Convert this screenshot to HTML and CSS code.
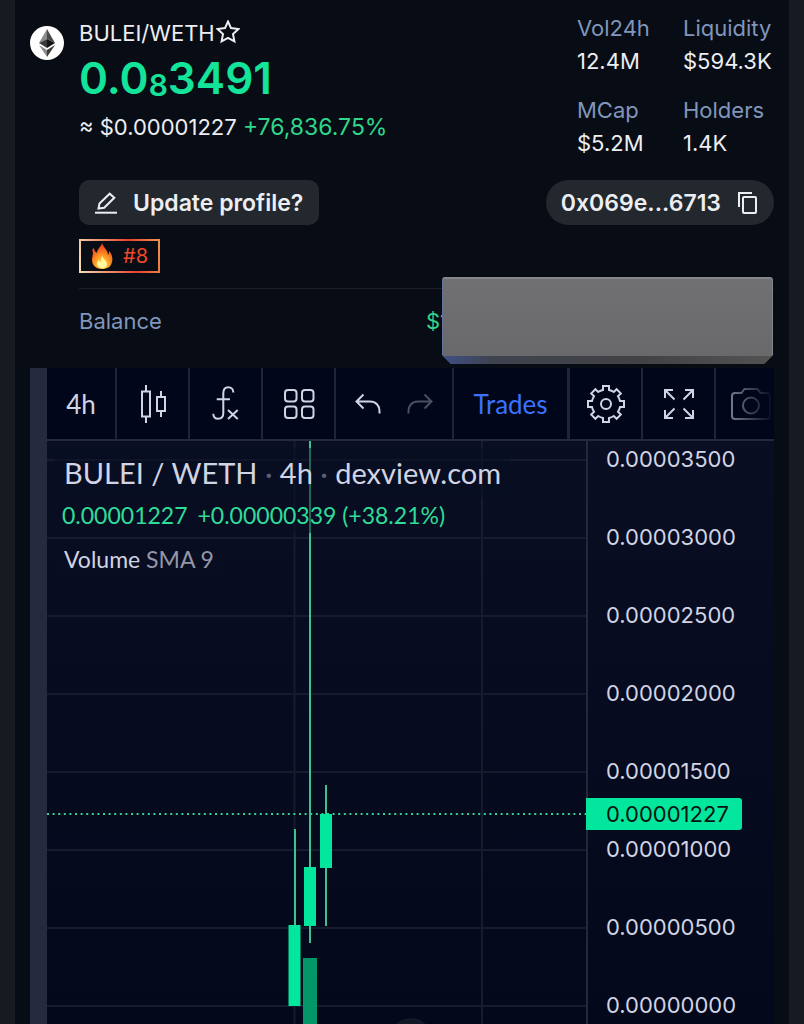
FILE: index.html
```html
<!DOCTYPE html>
<html lang="en">
<head>
    <meta charset="utf-8">
    <meta name="viewport" content="width=device-width, initial-scale=1">
    <title>BULEI/WETH</title>
    <link rel="stylesheet" href="styles.css">
</head>
<body>
<main class="panel">
    <header class="header">
        <svg class="coin" viewBox="0 0 34 34">
            <circle cx="17" cy="17" r="17" fill="#fff"/>
            <path d="M17 3L9 17l8-4z" fill="#8c8c8c"/>
            <path d="M17 3l8 14-8-4z" fill="#4a4a4a"/>
            <path d="M9 17l8-4v9z" fill="#3c3c3b"/>
            <path d="M25 17l-8-4v9z" fill="#141414"/>
            <path d="M9 19l8 5v7z" fill="#8c8c8c"/>
            <path d="M25 19l-8 5v7z" fill="#3c3c3b"/>
        </svg>
        <div class="identity">
            <h1 class="pair">BULEI/WETH
                <button class="star" type="button" aria-label="Favorite">
                    <svg width="24" height="24" viewBox="0 0 24 24"><path d="M12 1.500l3 6.600 7.500 1-5.500 5 1.400 7.200L12 17.800l-6.400 3.500L7 14.100l-5.500-5 7.500-1z"/></svg>
                </button>
            </h1>
            <div class="price">0.0<sub>8</sub>3491</div>
            <div class="usd">≈ $0.00001227 <span class="up">+76,836.75%</span></div>
        </div>
        <dl class="stats">
            <div><dt>Vol24h</dt><dd>12.4M</dd></div>
            <div><dt>Liquidity</dt><dd>$594.3K</dd></div>
            <div><dt>MCap</dt><dd>$5.2M</dd></div>
            <div><dt>Holders</dt><dd>1.4K</dd></div>
        </dl>
    </header>

    <section class="details">
        <div class="actions">
            <button class="update" type="button">
                <svg width="22" height="22" viewBox="0 0 22 22"><path d="M3.500 16.500l1-5L14.700 1.700l4.600 4L9.200 15.700z"/><path d="M0 20.700h22"/></svg>
                Update profile?
            </button>
            <button class="address" type="button">
                0x069e...6713
                <svg width="22" height="24" viewBox="0 0 22 24"><path d="M2 16V2h13"/><rect x="6" y="6" width="13" height="16" rx="1"/></svg>
            </button>
        </div>
        <div class="rank">
            <svg width="22" height="26" viewBox="0 0 22 26">
                <defs>
                    <radialGradient id="fire" cx="50%" cy="85%" r="75%">
                        <stop offset="0" stop-color="#ffe94a"/>
                        <stop offset=".4" stop-color="#ffa927"/>
                        <stop offset="1" stop-color="#f4411c"/>
                    </radialGradient>
                </defs>
                <path fill="url(#fire)" d="M11 0c1 4 6 7 6 12 1-1 1-3 1-4 3 3 4 7 3 11-1 5-5 7-10 7S1 23 1 17c0-3 1-5 1-8-1-1-1-3 1-4 0 2 1 4 3 5 0-4 4-6 5-10z"/>
                <path fill="#fff7a0" d="M11 13c1 3 5 5 5 8 0 3-2 4-5 4s-5-2-5-4c0-2 1-3 2-4 0 1 1 2 2 2 0-2 0-4 1-6z"/>
            </svg>
            #8
        </div>
        <div class="balance">
            <span>Balance</span>
            <span class="amount up">$1</span>
            <div class="cover"></div>
        </div>
    </section>

    <section class="chart">
        <div class="toolbar">
            <button class="tool interval" type="button">4h</button>
            <button class="tool" type="button" aria-label="Candles">
                <svg width="28" height="38" viewBox="0 0 28 38"><path d="M3 6.500h8v25H3zM7 0v6.500M7 31.500V38M18 12h8v14h-8zM22 6v6M22 26v6"/></svg>
            </button>
            <button class="tool" type="button" aria-label="Indicators">
                <svg width="28" height="38" viewBox="0 0 28 38"><path d="M21.300 7.500c0-3-2-5.200-5-5.200s-5 2.200-5 6v20c0 3.400-2 5.400-5 5.400s-5-2-5-5M4.700 14.300H18M16 25l9.700 9M25.700 25L16 34"/></svg>
            </button>
            <button class="tool" type="button" aria-label="Templates">
                <svg width="32" height="32" viewBox="0 0 32 32"><rect x="2" y="2" width="11.500" height="11.500" rx="3"/><rect x="19" y="2" width="11.500" height="11.500" rx="3"/><rect x="2" y="18.500" width="11.500" height="11.500" rx="3"/><rect x="19" y="18.500" width="11.500" height="11.500" rx="3"/></svg>
            </button>
            <div class="history">
                <button type="button" aria-label="Undo">
                    <svg width="26" height="22" viewBox="0 0 26 22"><path d="M8.500 1.500l-7 7 7 7M1.500 8.500H15c6 0 9.500 4 9.500 9.500v2.500"/></svg>
                </button>
                <button class="off" type="button" aria-label="Redo">
                    <svg width="26" height="22" viewBox="0 0 26 22"><path d="M17.500 1.500l7 7-7 7M24.500 8.500H11c-6 0-9.500 4-9.500 9.500v2.500"/></svg>
                </button>
            </div>
            <button class="tool trades" type="button">Trades</button>
            <button class="tool" type="button" aria-label="Settings">
                <svg width="40" height="40" viewBox="-20 -20 40 40"><path d="M-3-18H3v4A14.300 14.300 0 0 1 7.800-12L10.600-14.800 14.800-10.600 12-7.800A14.300 14.300 0 0 1 14-3H18V3H14A14.300 14.300 0 0 1 12 7.800L14.800 10.600 10.600 14.800 7.800 12A14.300 14.300 0 0 1 3 14V18H-3V14A14.300 14.300 0 0 1-7.800 12L-10.600 14.800-14.800 10.600-12 7.800A14.300 14.300 0 0 1-14 3H-18V-3H-14A14.300 14.300 0 0 1-12-7.800L-14.800-10.600-10.600-14.800-7.800-12A14.300 14.300 0 0 1-3-14z"/><circle r="5"/></svg>
            </button>
            <button class="tool" type="button" aria-label="Fullscreen">
                <svg width="32" height="32" viewBox="0 0 32 32"><path d="M10 2H2v8M2 2l9.500 9.500M22 2h8v8M30 2l-9.500 9.500M10 30H2v-8M2 30l9.500-9.500M22 30h8v-8M30 30l-9.500-9.500"/></svg>
            </button>
            <button class="camera" type="button" aria-label="Snapshot">
                <svg width="40" height="34" viewBox="0 0 40 34"><path d="M4 6h6.500l3-4h13l3 4H36q3 0 3 3v20q0 3-3 3H4q-3 0-3-3V9q0-3 3-3z"/><circle cx="20" cy="18.500" r="8"/></svg>
            </button>
        </div>

        <div class="stage">
            <div class="plot">
                <svg class="candles" width="100%" height="583">
                    <g class="grid">
                        <line x1="0" x2="100%" y1="19" y2="19"/>
                        <line x1="0" x2="100%" y1="97" y2="97"/>
                        <line x1="0" x2="100%" y1="175" y2="175"/>
                        <line x1="0" x2="100%" y1="253" y2="253"/>
                        <line x1="0" x2="100%" y1="331" y2="331"/>
                        <line x1="0" x2="100%" y1="409" y2="409"/>
                        <line x1="0" x2="100%" y1="487" y2="487"/>
                        <line x1="0" x2="100%" y1="565" y2="565"/>
                        <line x1="247.500" x2="247.500" y1="0" y2="100%"/>
                        <line x1="435" x2="435" y1="0" y2="100%"/>
                    </g>
                    <circle cx="364" cy="598" r="21" fill="#151827"/>
                    <line class="last" x1="0" x2="100%" y1="373" y2="373"/>
                    <g class="wicks">
                        <rect x="247" y="388" width="2" height="97"/>
                        <rect x="262" y="0" width="2" height="502"/>
                        <rect x="278" y="344" width="2" height="141"/>
                    </g>
                    <g class="bodies">
                        <rect x="241.500" y="484" width="12" height="81"/>
                        <rect x="257" y="426" width="12" height="59"/>
                        <rect x="273" y="373" width="12" height="54"/>
                    </g>
                    <rect x="256" y="517" width="14" height="66" fill="#049667"/>
                </svg>
                <div class="legend">
                    <div class="symbol">BULEI / WETH <i>·</i> 4h <i>·</i> dexview.com</div>
                    <div class="change"><span>0.00001227</span><span>+0.00000339 (+38.21%)</span></div>
                    <div class="volume">Volume <span>SMA 9</span></div>
                </div>
            </div>
            <div class="axis">
                <div>0.00003500</div>
                <div>0.00003000</div>
                <div>0.00002500</div>
                <div>0.00002000</div>
                <div>0.00001500</div>
                <div>0.00001000</div>
                <div>0.00000500</div>
                <div>0.00000000</div>
                <output class="tag">0.00001227</output>
            </div>
        </div>
    </section>
</main>
</body>
</html>
```
FILE: styles.css
```css
* {
    box-sizing: border-box;
}
body {
    margin: 0;
    padding: 0 15px;
    background: #171a21;
    color: #eceef2;
    font-family: Inter, "Liberation Sans", sans-serif;
    font-size: 22px;
}
button {
    margin: 0;
    padding: 0;
    border: 0;
    background: none;
    color: inherit;
    font: inherit;
}
svg {
    display: block;
    flex: none;
}
button svg {
    fill: none;
    stroke: currentColor;
    stroke-width: 2;
}
.up {
    color: #2fd68b;
}
.panel {
    min-height: 100vh;
    padding: 12px 15px 0;
    background: #080c14;
}

/* pair, price and stats */
.header {
    display: flex;
}
.coin {
    width: 34px;
    height: 34px;
    margin: 14px 15px 0 0;
}
.identity {
    flex: 1;
    padding-top: 4px;
}
.pair {
    display: flex;
    align-items: center;
    gap: 1px;
    margin: 0;
    font-size: 22px;
    font-weight: 400;
    line-height: 34px;
}
.star {
    padding-bottom: 3px;
}
.price {
    margin-bottom: 4px;
    color: #14e39a;
    font-size: 44px;
    font-weight: 600;
    line-height: 56px;
}
.price sub {
    font-size: 30px;
    line-height: 1;
    vertical-align: -2px;
}
.usd {
    line-height: 34px;
}
.usd .up {
    font-size: 23px;
}
.stats {
    display: grid;
    grid-template-columns: 90px 91px;
    gap: 16px;
    margin: 0;
    line-height: 33px;
}
.stats dt, .balance {
    color: #8096bc;
}
.stats dd {
    margin: 0;
}

/* buttons, rank and balance */
.details {
    margin: 20px 0 15px 49px;
}
.actions {
    display: flex;
    justify-content: space-between;
}
.update, .address {
    display: flex;
    align-items: center;
    gap: 16px;
    height: 45px;
    padding: 0 16px;
    border-radius: 10px;
    background: #22282e;
    font-size: 23px;
    font-weight: 600;
}
.address {
    border-radius: 23px;
    padding: 0 15px;
}
.rank {
    display: flex;
    align-items: center;
    gap: 10px;
    width: max-content;
    height: 34px;
    margin: 14px 0 15px;
    padding: 0 10px;
    border: 2px solid;
    border-image: linear-gradient(75deg, #f5dfb4, #e8402c 65%, #f0934c) 1;
    color: #f0492a;
    font-size: 20px;
}
.balance {
    display: flex;
    justify-content: space-between;
    position: relative;
    border-top: 1px solid #1d202b;
    line-height: 64px;
}
.amount {
    width: 348px;
}
.cover {
    position: absolute;
    top: -12px;
    right: 1px;
    width: 331px;
    height: 87px;
    border-top: 2px solid #85878d;
    border-left: 1px solid #66739f;
    border-right: 1px solid #85868a;
    border-radius: 3px;
    background: linear-gradient(90deg, #3f4f85, #3f434f 15%, #424144 60%, #535253) bottom / 100% 8px no-repeat, linear-gradient(#717173, #68686a);
    clip-path: polygon(0 0, 100% 0, 100% 78px, 322px 100%, 9px 100%, 0 78px);
}

/* chart */
.chart {
    border-left: 17px solid #252a3e;
    background: #050920;
    font-family: Lato, "Open Sans", sans-serif;
    color: #d1d4e3;
}
.toolbar {
    display: flex;
    height: 73px;
    border-bottom: 2px solid #252a3b;
    background: #02061a;
}
.tool, .history {
    display: flex;
    align-items: center;
    justify-content: center;
    flex: none;
    width: 73px;
    border-right: 2px solid #1f2436;
}
.interval {
    width: 70px;
    font-size: 26px;
}
.history {
    width: 118px;
}
.history button {
    display: flex;
    justify-content: center;
    width: 52px;
}
.history .off {
    color: #4b4f5f;
}
.trades {
    width: 116px;
    border-right-width: 3px;
    color: #3a72ff;
    font-size: 26px;
}
.camera {
    display: flex;
    align-items: center;
    flex: 1;
    min-width: 0;
    padding-left: 15px;
    overflow: hidden;
    color: #7f8290;
    -webkit-mask-image: linear-gradient(90deg, #000 20%, transparent);
    mask-image: linear-gradient(90deg, #000 20%, transparent);
}
.stage {
    display: flex;
    height: 583px;
    overflow: hidden;
    background: linear-gradient(#090e23, #04081b);
}
.plot {
    flex: 1;
    min-width: 0;
    position: relative;
    overflow: hidden;
}
.grid {
    stroke: #161b2e;
    stroke-width: 2;
}
.last {
    stroke: #35d08e;
    stroke-width: 2;
    stroke-dasharray: 2 3.6;
}
.wicks {
    fill: #3fc28c;
}
.bodies {
    fill: #02e79d;
}
.legend {
    position: absolute;
    top: 7px;
    left: 7px;
    display: flex;
    flex-direction: column;
    align-items: flex-start;
    white-space: nowrap;
}
.legend > div {
    padding: 0 10px;
    background: rgba(8, 13, 34, .5);
}
.symbol {
    font-size: 29px;
    line-height: 50px;
}
.symbol i {
    color: #5c6072;
    font-style: normal;
}
.legend .change {
    display: flex;
    gap: 10px;
    padding: 0 8px;
    color: #2fdc98;
    font-size: 23px;
    line-height: 35px;
}
.volume {
    margin-top: 9px;
    font-size: 23px;
    line-height: 34px;
}
.volume span {
    color: #9497a8;
}
.axis {
    position: relative;
    width: 188px;
    border-left: 2px solid #23283a;
    padding-left: 18px;
    font-family: Inter, "Liberation Sans", sans-serif;
    line-height: 78px;
}
.axis div:first-child {
    margin-top: -21px;
}
.tag {
    position: absolute;
    top: 357px;
    left: -2px;
    padding: 0 13px 0 20px;
    border-radius: 0 3px 3px 0;
    background: #02e79d;
    color: #04140f;
    line-height: 32px;
}
```
